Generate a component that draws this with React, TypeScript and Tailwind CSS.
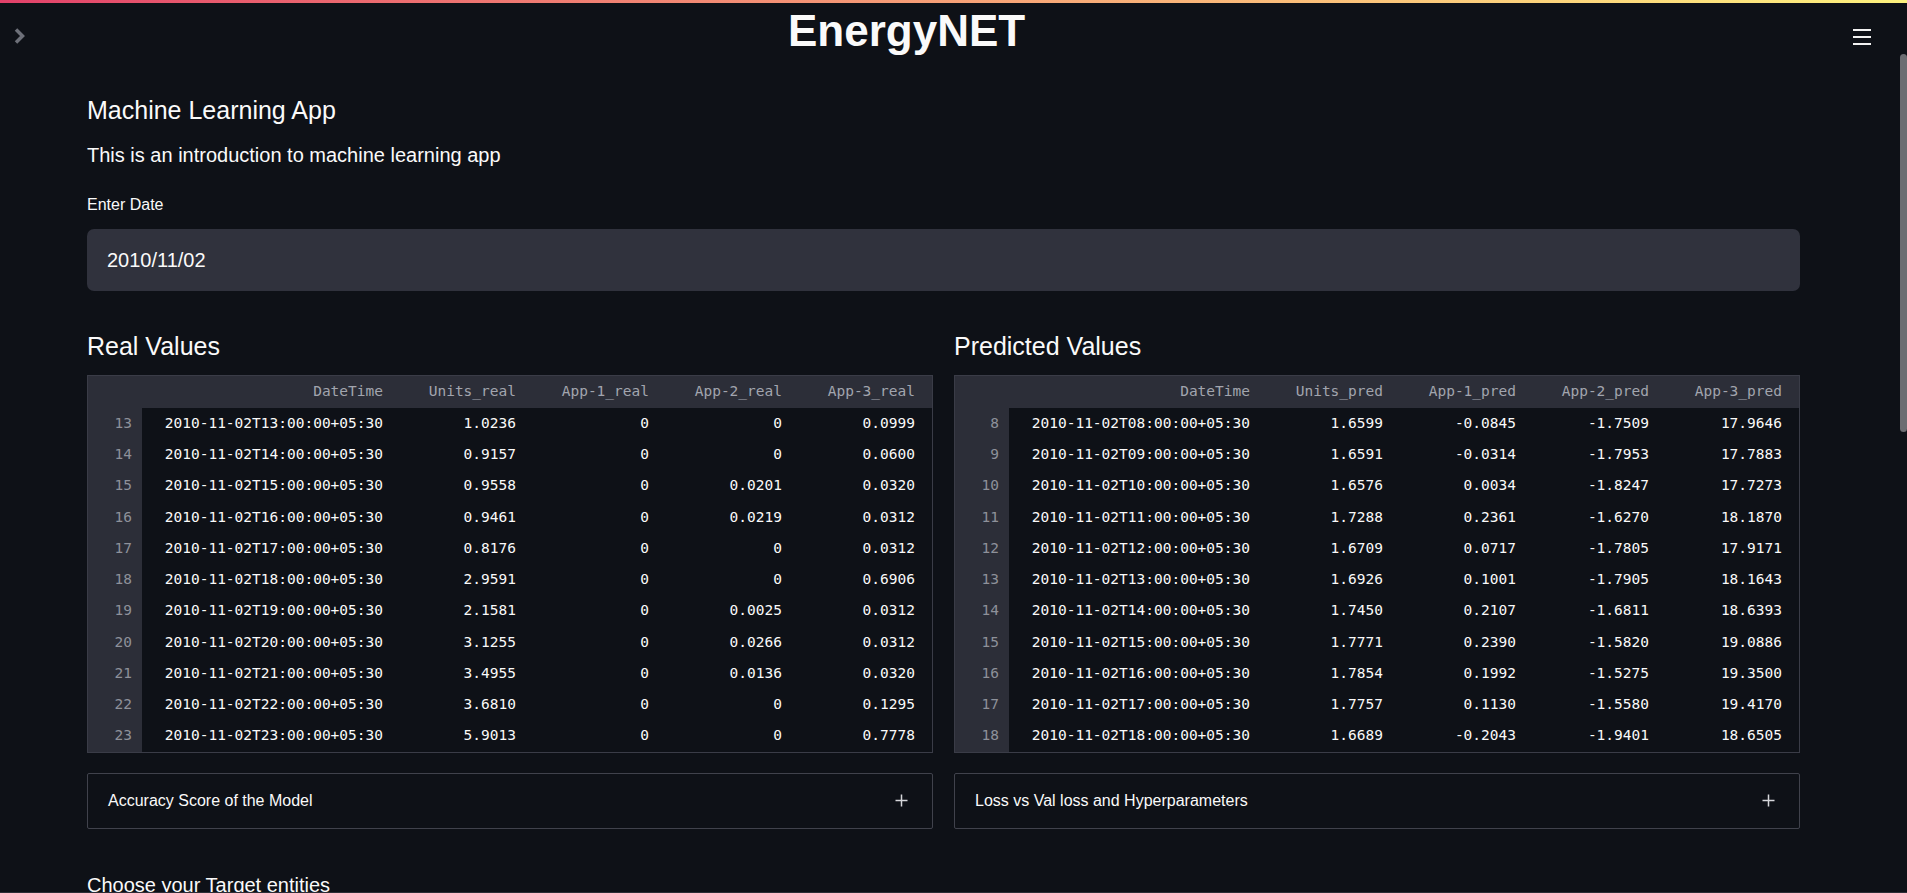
import React from 'react';

type Row = { idx: number; dt: string; v: string[] };

const realCols = ['DateTime', 'Units_real', 'App-1_real', 'App-2_real', 'App-3_real'];
const predCols = ['DateTime', 'Units_pred', 'App-1_pred', 'App-2_pred', 'App-3_pred'];

const realRows: Row[] = [
  { idx: 13, dt: '2010-11-02T13:00:00+05:30', v: ['1.0236', '0', '0', '0.0999'] },
  { idx: 14, dt: '2010-11-02T14:00:00+05:30', v: ['0.9157', '0', '0', '0.0600'] },
  { idx: 15, dt: '2010-11-02T15:00:00+05:30', v: ['0.9558', '0', '0.0201', '0.0320'] },
  { idx: 16, dt: '2010-11-02T16:00:00+05:30', v: ['0.9461', '0', '0.0219', '0.0312'] },
  { idx: 17, dt: '2010-11-02T17:00:00+05:30', v: ['0.8176', '0', '0', '0.0312'] },
  { idx: 18, dt: '2010-11-02T18:00:00+05:30', v: ['2.9591', '0', '0', '0.6906'] },
  { idx: 19, dt: '2010-11-02T19:00:00+05:30', v: ['2.1581', '0', '0.0025', '0.0312'] },
  { idx: 20, dt: '2010-11-02T20:00:00+05:30', v: ['3.1255', '0', '0.0266', '0.0312'] },
  { idx: 21, dt: '2010-11-02T21:00:00+05:30', v: ['3.4955', '0', '0.0136', '0.0320'] },
  { idx: 22, dt: '2010-11-02T22:00:00+05:30', v: ['3.6810', '0', '0', '0.1295'] },
  { idx: 23, dt: '2010-11-02T23:00:00+05:30', v: ['5.9013', '0', '0', '0.7778'] },
];

const predRows: Row[] = [
  { idx: 8, dt: '2010-11-02T08:00:00+05:30', v: ['1.6599', '-0.0845', '-1.7509', '17.9646'] },
  { idx: 9, dt: '2010-11-02T09:00:00+05:30', v: ['1.6591', '-0.0314', '-1.7953', '17.7883'] },
  { idx: 10, dt: '2010-11-02T10:00:00+05:30', v: ['1.6576', '0.0034', '-1.8247', '17.7273'] },
  { idx: 11, dt: '2010-11-02T11:00:00+05:30', v: ['1.7288', '0.2361', '-1.6270', '18.1870'] },
  { idx: 12, dt: '2010-11-02T12:00:00+05:30', v: ['1.6709', '0.0717', '-1.7805', '17.9171'] },
  { idx: 13, dt: '2010-11-02T13:00:00+05:30', v: ['1.6926', '0.1001', '-1.7905', '18.1643'] },
  { idx: 14, dt: '2010-11-02T14:00:00+05:30', v: ['1.7450', '0.2107', '-1.6811', '18.6393'] },
  { idx: 15, dt: '2010-11-02T15:00:00+05:30', v: ['1.7771', '0.2390', '-1.5820', '19.0886'] },
  { idx: 16, dt: '2010-11-02T16:00:00+05:30', v: ['1.7854', '0.1992', '-1.5275', '19.3500'] },
  { idx: 17, dt: '2010-11-02T17:00:00+05:30', v: ['1.7757', '0.1130', '-1.5580', '19.4170'] },
  { idx: 18, dt: '2010-11-02T18:00:00+05:30', v: ['1.6689', '-0.2043', '-1.9401', '18.6505'] },
];

const DataTable: React.FC<{ cols: string[]; rows: Row[] }> = ({ cols, rows }) => (
  <div className="mt-[13px] border border-[#3a3c47] font-['DejaVu_Sans_Mono',monospace] text-[14.5px]">
    <div className="grid h-[32px] grid-cols-[54px_1fr_133px_133px_133px_133px] items-center bg-[#2c2e38] text-[#a2a5ae]">
      <div />
      {cols.map((c) => (
        <div key={c} className="pr-[17px] text-right">
          {c}
        </div>
      ))}
    </div>
    {rows.map((r) => (
      <div key={r.idx} className="grid h-[31.25px] grid-cols-[54px_1fr_133px_133px_133px_133px] text-[#fafafa]">
        <div className="flex items-center justify-end bg-[#2c2e38] pr-[10px] text-[#8e919a]">{r.idx}</div>
        <div className="flex items-center justify-end pr-[17px]">{r.dt}</div>
        {r.v.map((x, i) => (
          <div key={i} className="flex items-center justify-end pr-[17px]">
            {x}
          </div>
        ))}
      </div>
    ))}
  </div>
);

const Expander: React.FC<{ label: string }> = ({ label }) => (
  <div className="mt-[20px] flex h-[56px] items-center justify-between rounded-[2px] border border-[#40424c] pl-[20px] pr-[24px] text-[16px]">
    <span>{label}</span>
    {/* plus sign */}
    <svg width="13" height="13" viewBox="0 0 13 13">
      <path d="M6.5 0.5V12.5M0.5 6.5H12.5" stroke="#d6d7db" strokeWidth="1.5" />
    </svg>
  </div>
);

export default function App() {
  return (
    <div className="relative h-[893px] w-full overflow-hidden bg-[#0e1117] font-['Liberation_Sans',Arial,sans-serif] text-[#fafafa]">
      {/* top decoration */}
      <div className="h-[3px] w-full bg-gradient-to-r from-[#e2416a] to-[#fdf27e]" />

      {/* sidebar toggle */}
      <svg className="absolute left-[13px] top-[27px]" width="14" height="18" viewBox="0 0 14 18">
        <polyline points="3,2.5 9.5,9 3,15.5" fill="none" stroke="#6d7079" strokeWidth="3.5" />
      </svg>

      {/* menu */}
      <div className="absolute right-[36px] top-[29px] flex w-[18px] flex-col gap-[5px]">
        <div className="h-[2px] bg-[#f2f2f2]" />
        <div className="h-[2px] bg-[#f2f2f2]" />
        <div className="h-[2px] bg-[#f2f2f2]" />
      </div>

      {/* scrollbar */}
      <div className="absolute right-0 top-[54px] h-[378px] w-[7px] rounded-[4px] bg-[#6c6d72]" />

      <h1 className="pl-[788px] pt-[2px] text-[44px] font-bold leading-[52px]">EnergyNET</h1>

      <main className="ml-[87px] w-[1713px]">
        <h3 className="mt-[37px] text-[25px] leading-[32px]">Machine Learning App</h3>
        <p className="mt-[15px] text-[20px] leading-[28px]">This is an introduction to machine learning app</p>

        <label className="mt-[26px] block text-[16px] leading-[20px]">Enter Date</label>
        <div className="mt-[14px] flex h-[62px] items-center rounded-[7px] bg-[#30323d] pl-[20px] text-[20px] leading-[28px]">
          2010/11/02
        </div>

        <div className="mt-[39px] grid grid-cols-2 gap-[21px]">
          <section>
            <h3 className="text-[25px] leading-[32px]">Real Values</h3>
            <DataTable cols={realCols} rows={realRows} />
            <Expander label="Accuracy Score of the Model" />
          </section>
          <section>
            <h3 className="text-[25px] leading-[32px]">Predicted Values</h3>
            <DataTable cols={predCols} rows={predRows} />
            <Expander label="Loss vs Val loss and Hyperparameters" />
          </section>
        </div>

        <h3 className="mt-[42px] text-[20px] leading-[28px]">Choose your Target entities</h3>
      </main>

      <div className="absolute bottom-0 left-0 h-px w-full bg-[#2c2e36]" />
    </div>
  );
}
